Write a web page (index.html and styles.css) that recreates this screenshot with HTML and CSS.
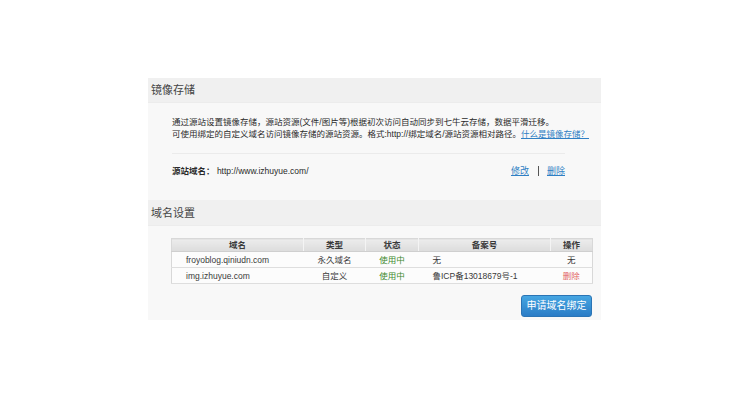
FILE: index.html
```html
<!DOCTYPE html>
<html lang="zh-CN">
<head>
<meta charset="utf-8">
<link rel="stylesheet" href="styles.css">
</head>
<body>
<div class="panel">
  <div class="sec-head">镜像存储</div>
  <div class="sec-body mirror">
    <p class="desc">通过源站设置镜像存储，源站资源(文件/图片等)根据初次访问自动同步到七牛云存储，数据平滑迁移。<br>可使用绑定的自定义域名访问镜像存储的源站资源。格式:http://绑定域名/源站资源相对路径。<a href="#" class="link">什么是镜像存储？</a></p>
    <div class="divider"></div>
    <div class="origin">
      <div class="origin-left"><b>源站域名：</b>&nbsp;http://www.izhuyue.com/</div>
      <div class="origin-ops"><a href="#" class="link">修改</a><span class="sep"></span><a href="#" class="link">删除</a></div>
    </div>
  </div>
  <div class="sec-head head2">域名设置</div>
  <div class="sec-body domains">
    <table class="dtable">
      <colgroup><col class="c1"><col class="c2"><col class="c3"><col class="c4"><col class="c5"></colgroup>
      <thead>
        <tr><th>域名</th><th>类型</th><th>状态</th><th>备案号</th><th>操作</th></tr>
      </thead>
      <tbody>
        <tr><td class="left">froyoblog.qiniudn.com</td><td>永久域名</td><td class="ok">使用中</td><td class="left">无</td><td>无</td></tr>
        <tr><td class="left">img.izhuyue.com</td><td>自定义</td><td class="ok">使用中</td><td class="left">鲁ICP备13018679号-1</td><td class="del">删除</td></tr>
      </tbody>
    </table>
    <div class="actions"><button class="btn">申请域名绑定</button></div>
  </div>
</div>
</body>
</html>
```
FILE: styles.css
```css
html, body {
  margin: 0;
  padding: 0;
  background: #fff;
}
body {
  font-family: "Liberation Sans", "Noto Sans CJK SC", sans-serif;
  font-size: 8.5px;
  color: #2a2a2a;
}
.panel {
  width: 453px;
  margin: 78px 0 0 148px;
  background: #f8f8f8;
  padding-bottom: 3px;
}
.sec-head {
  height: 25px;
  line-height: 25px;
  background: #f0f0f0;
  padding-left: 3px;
  font-size: 11px;
  color: #444;
  border-bottom: 1px solid #ececec;
  box-sizing: border-box;
}
.head2 {
  height: 26px;
  line-height: 26px;
}
.mirror {
  padding: 13px 36px 23px 24px;
}
.desc {
  margin: 0 -30px 0 0;
  line-height: 12px;
  white-space: nowrap;
}
.link {
  color: #2f7fc4;
  text-decoration: underline;
}
.divider {
  height: 1px;
  background: #ebebeb;
  margin-top: 13px;
}
.origin {
  display: flex;
  justify-content: space-between;
  align-items: center;
  margin-top: 11px;
  line-height: 12px;
}
.origin-left b {
  color: #2a2a2a;
}
.origin-ops {
  display: flex;
  align-items: center;
  font-size: 9px;
}
.sep {
  display: inline-block;
  width: 1px;
  height: 10px;
  background: #555;
  margin: 0 8px 0 9px;
}
.domains {
  padding: 12px 9px 0 23px;
}
.dtable {
  width: 421px;
  border-collapse: collapse;
  table-layout: fixed;
  background: #fcfcfc;
  border: 1px solid #d8d8d8;
}
.c1 { width: 132px; }
.c2 { width: 62px; }
.c3 { width: 53px; }
.c4 { width: 132px; }
.c5 { width: 42px; }
.dtable th {
  height: 12px;
  padding: 0;
  font-weight: bold;
  color: #3a3a3a;
  background: linear-gradient(#ececec, #dcdcdc);
  border-left: 1px solid #f4f4f4;
  border-bottom: 1px solid #cfcfcf;
  line-height: 12px;
  text-align: center;
}
.dtable th:first-child {
  border-left: none;
}
.dtable td {
  height: 15px;
  padding: 0;
  text-align: center;
  border-bottom: 1px solid #dedede;
  color: #3a3a3a;
  line-height: 12px;
}
.dtable td.left {
  text-align: left;
  padding-left: 14px;
}
.dtable td.ok {
  color: #3d8a2c;
}
.dtable td.del {
  color: #e26464;
}
.actions {
  display: flex;
  justify-content: flex-end;
  margin-top: 11px;
}
.btn {
  width: 71px;
  height: 22px;
  padding: 0;
  border: 1px solid #2a74b5;
  border-radius: 3px;
  background: linear-gradient(#46a6e2, #2a7cc6);
  color: #fff;
  font-family: "Liberation Sans", "Noto Sans CJK SC", sans-serif;
  font-size: 10px;
  line-height: 20px;
}
```
